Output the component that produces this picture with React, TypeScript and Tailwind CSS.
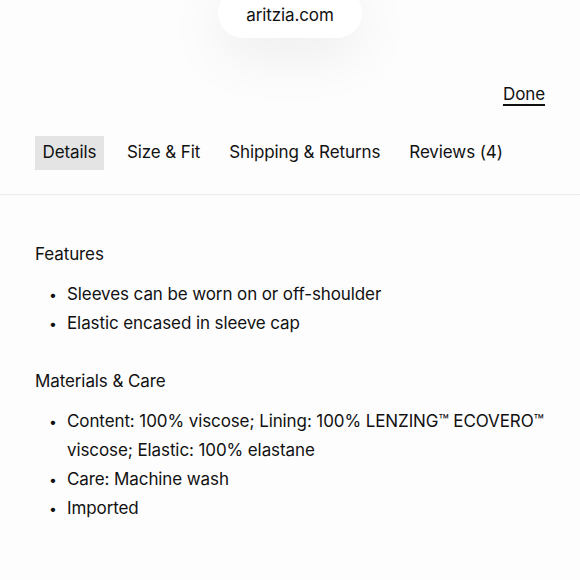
import React from 'react';

const tabs = ['Details', 'Size & Fit', 'Shipping & Returns', 'Reviews (4)'];

const sections = [
  {
    title: 'Features',
    items: ['Sleeves can be worn on or off-shoulder', 'Elastic encased in sleeve cap'],
  },
  {
    title: 'Materials & Care',
    items: [
      'Content: 100% viscose; Lining: 100% LENZING™ ECOVERO™ viscose; Elastic: 100% elastane',
      'Care: Machine wash',
      'Imported',
    ],
  },
];

export default function App() {
  return (
    <div className="w-full h-[580px] overflow-hidden bg-[#fdfdfd] text-[#111111] font-['Inter',sans-serif] text-[17px] tracking-[-0.1px]">
      {/* URL pill */}
      <div className="h-[120px] flex flex-col">
        <div className="flex justify-center">
          <div className="-mt-[12px] h-[50px] w-[144px] rounded-full bg-white shadow-[0_14px_60px_rgba(0,0,0,0.08)] flex items-end justify-center pb-[12px] text-[17px] leading-[22px]">
            aritzia.com
          </div>
        </div>
        <div className="flex justify-end pr-[35px] mt-[44px]">
          <button className="leading-[24px] underline underline-offset-[4px] decoration-[1.5px]">Done</button>
        </div>
      </div>

      {/* Tabs */}
      <div>
        <div className="flex gap-[17px] px-[35px] pt-[16px] pb-[24px]">
          {tabs.map((t, i) => (
            <div
              key={t}
              className={`h-[34px] flex items-center ${i === 0 ? 'bg-[#e4e4e4] px-[7.5px]' : 'px-[6px]'}`}
            >
              {t}
            </div>
          ))}
        </div>
        <div className="h-[1px] bg-[#ededed] shadow-[0_1px_2px_rgba(0,0,0,0.03)]" />
      </div>

      {/* Content */}
      <div className="px-[35px] pt-[45px]">
        {sections.map((s, si) => (
          <div key={s.title} className={si > 0 ? 'mt-[29px]' : ''}>
            <h3 className="leading-[29px]">{s.title}</h3>
            <ul className="mt-[11px]">
              {s.items.map((it) => (
                <li key={it} className="flex leading-[29px]">
                  <span className="w-[32px] shrink-0 pl-[14px] text-[14px]">•</span>
                  <span>{it}</span>
                </li>
              ))}
            </ul>
          </div>
        ))}
      </div>
    </div>
  );
}
